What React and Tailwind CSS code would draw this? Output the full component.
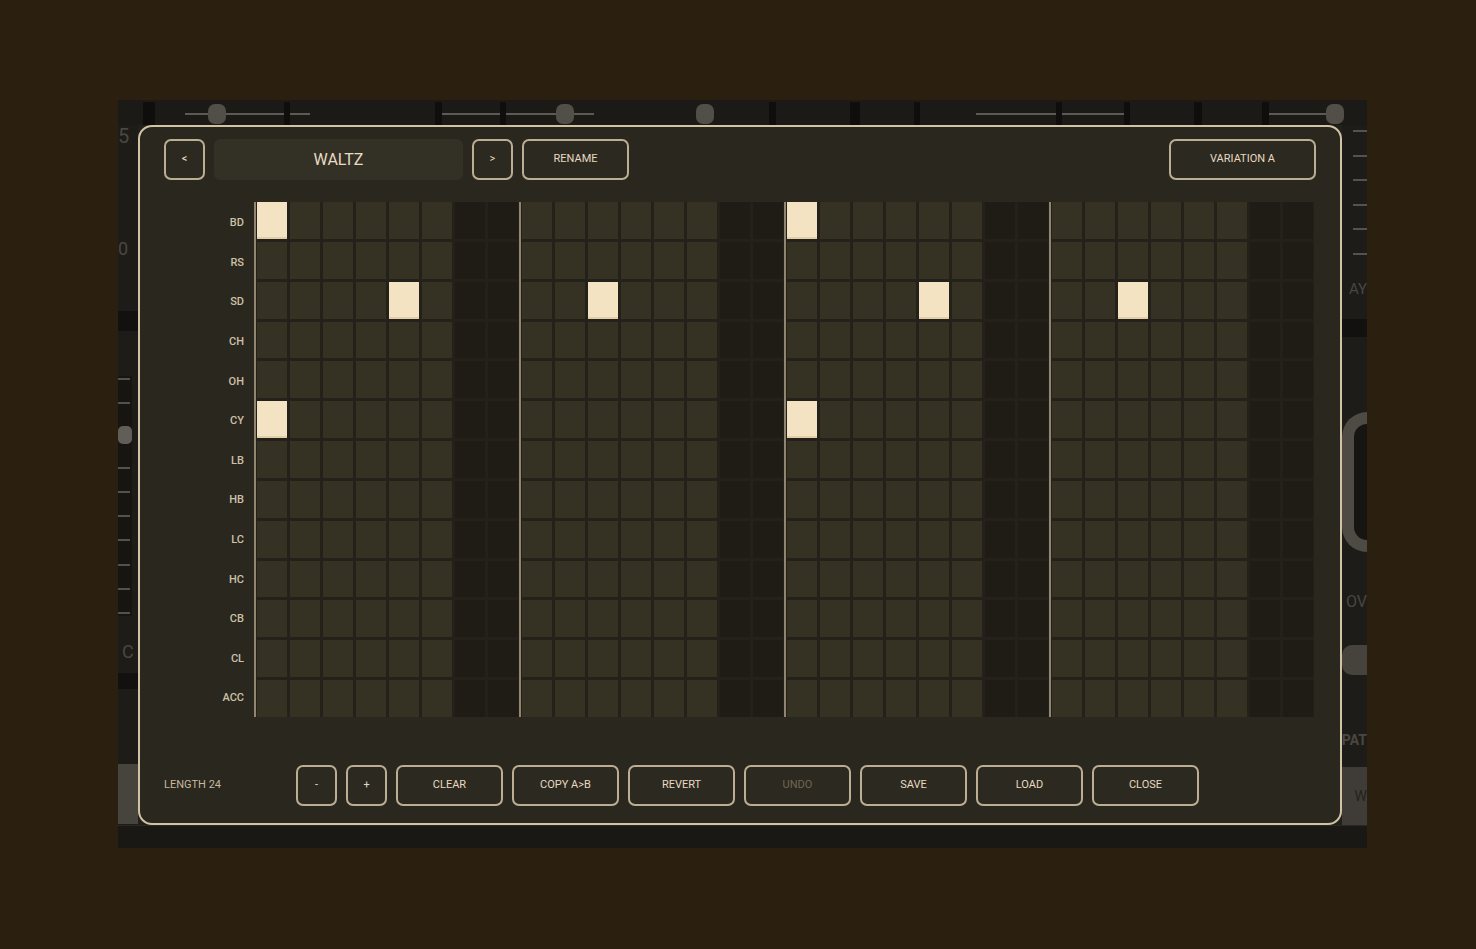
import React from "react";

const ROWS = ["BD", "RS", "SD", "CH", "OH", "CY", "LB", "HB", "LC", "HC", "CB", "CL", "ACC"];

// steps that are switched on, per instrument (24-step pattern, 6 steps per bar)
const PATTERN = {
  BD: [0, 12],
  SD: [4, 8, 16, 20],
  CY: [0, 12],
};

const BOTTOM_BUTTONS = ["CLEAR", "COPY A>B", "REVERT", "UNDO", "SAVE", "LOAD", "CLOSE"];

// top edge of the synth panel behind the dialog: [kind, width]
const TOP_STRIP = [
  ["gap", 25], ["tick", 12], ["gap", 30], ["line", 23], ["knob", 18], ["line", 58], ["tick", 6],
  ["line", 20], ["gap", 125], ["tick", 7], ["line", 58], ["tick", 6], ["line", 50], ["knob", 18],
  ["line", 20], ["gap", 102], ["knob", 18], ["gap", 55], ["tick", 7], ["gap", 74], ["tick", 10],
  ["gap", 54], ["tick", 6], ["gap", 56], ["line", 80], ["tick", 6], ["line", 62], ["tick", 6],
  ["gap", 64], ["tick", 8], ["gap", 60], ["tick", 7], ["line", 57], ["knob", 18],
];

function Btn({ children, className = "", dim = false }) {
  return (
    <button
      type="button"
      className={`flex h-[41px] items-center justify-center rounded-[7px] border-2 border-[#bcae92] bg-[#2c2920] text-[11px] ${
        dim ? "text-[#6f6756]" : "text-[#e6dac2]"
      } ${className}`}
    >
      {children}
    </button>
  );
}

function Group({ index }) {
  const cells = [];
  ROWS.forEach((row) => {
    for (let c = 0; c < 8; c++) {
      const active = c < 6;
      const step = index * 6 + c;
      const on = active && (PATTERN[row] || []).includes(step);
      cells.push(
        <div
          key={row + c}
          className={
            on
              ? "bg-[#f4e3c2] shadow-[inset_0_-2px_0_#e2cfa8]"
              : active
              ? "bg-[#363223]"
              : "bg-[#1e1c15]"
          }
        />
      );
    }
  });
  return (
    <div className="h-[515px] border-l-2 border-[#8f8570] bg-[#24211a] pl-[1px] pr-[1px]">
      <div className="grid h-full grid-cols-[repeat(8,30px)] grid-rows-[repeat(13,1fr)] gap-[3px]">
        {cells}
      </div>
    </div>
  );
}

function TopStrip() {
  return (
    <div className="flex h-[25px] items-center bg-[#1c1a16] pt-[2px]">
      {TOP_STRIP.map(([kind, w], i) => {
        if (kind === "tick") return <div key={i} className="h-full shrink-0 bg-[#0f0e0c]" style={{ width: w }} />;
        if (kind === "line") return <div key={i} className="h-[2px] shrink-0 bg-[#5d5a53]" style={{ width: w }} />;
        if (kind === "knob") return <div key={i} className="h-[20px] shrink-0 rounded-[7px] bg-[#524f48]" style={{ width: w }} />;
        return <div key={i} className="shrink-0" style={{ width: w }} />;
      })}
    </div>
  );
}

function LeftStrip() {
  return (
    <div className="flex h-[700px] w-[20px] flex-col items-start overflow-hidden bg-[#1e1c18] font-['Roboto',sans-serif] text-[#4a4741]">
      <span className="h-[22px] text-[20px] leading-[22px]">5</span>
      <span className="mt-[92px] h-[20px] text-[18px] leading-[20px]">0</span>
      <div className="mt-[52px] h-[20px] w-[20px] bg-[#121110]" />
      <div className="mt-[45px] flex h-[240px] w-[14px] flex-col justify-between bg-[#161512] py-[2px]">
        {[0, 1, 2, 3, 4, 5, 6, 7, 8, 9].map((i) =>
          i === 2 ? (
            <div key={i} className="h-[18px] w-[14px] rounded-[5px] bg-[#615e57]" />
          ) : (
            <div key={i} className="h-[2px] w-[12px] bg-[#55524b]" />
          )
        )}
      </div>
      <span className="mt-[25px] h-[22px] pl-[4px] text-[18px] leading-[22px]">C</span>
      <div className="mt-[10px] h-[16px] w-[20px] bg-[#121110]" />
      <div className="mt-[75px] h-[60px] w-[20px] bg-[#47443e]" />
    </div>
  );
}

function RightStrip() {
  return (
    <div className="flex h-[700px] w-[25px] flex-col items-end overflow-hidden bg-[#1e1c18] font-['Roboto',sans-serif] text-[#4a4741]">
      <div className="mt-[5px] flex h-[125px] flex-col justify-between">
        {[0, 1, 2, 3, 4, 5].map((i) => (
          <div key={i} className="h-[2px] w-[14px] bg-[#55524b]" />
        ))}
      </div>
      <span className="mt-[24px] h-[20px] text-[15px] leading-[20px]">AY</span>
      <div className="mt-[20px] h-[18px] w-[25px] bg-[#121110]" />
      <div className="mt-[70px] flex h-[150px] w-[25px] items-center justify-end">
        <div className="h-[140px] w-[25px] rounded-l-full border-y-[12px] border-l-[12px] border-[#4e4b45] bg-[#161512]" />
      </div>
      <span className="mt-[34px] h-[22px] text-[16px] leading-[22px]">OV</span>
      <div className="mt-[32px] h-[30px] w-[25px] rounded-l-[10px] bg-[#46433d]" />
      <span className="mt-[54px] h-[22px] text-[14px] font-bold leading-[22px]">PAT</span>
      <div className="mt-[16px] flex h-[58px] w-[25px] shrink-0 items-center justify-end bg-[#3f3c37] text-[14px] text-[#24221e]">
        W
      </div>
    </div>
  );
}

export default function App() {
  return (
    <div className="min-h-[949px] w-full bg-[#2b1f0f] pl-[118px] pt-[100px] font-['Roboto','Liberation_Sans',sans-serif]">
      <div className="flex w-[1249px] flex-col bg-[#22201b]">
        <TopStrip />
        <div className="flex">
          <LeftStrip />

          {/* Pattern editor dialog */}
          <div className="flex h-[700px] w-[1204px] flex-col rounded-[14px] border-2 border-[#d2c3a5] bg-[#2a271f] px-[24px] pt-[12px]">
            {/* Header */}
            <div className="flex items-center gap-[9px]">
              <Btn className="w-[41px]">&lt;</Btn>
              <div className="flex h-[41px] w-[249px] items-center justify-center rounded-[6px] bg-[#333026] text-[16px] text-[#e8dcc4]">
                WALTZ
              </div>
              <Btn className="w-[41px]">&gt;</Btn>
              <Btn className="w-[107px]">RENAME</Btn>
              <Btn className="ml-auto w-[147px]">VARIATION A</Btn>
            </div>

            {/* Step grid */}
            <div className="mt-[22px] flex">
              <div className="-ml-[24px] grid h-[515px] w-[114px] grid-rows-[repeat(13,1fr)] gap-[3px] pr-[10px] pt-[3px]">
                {ROWS.map((r) => (
                  <div key={r} className="flex items-center justify-end text-[11px] font-medium text-[#cdc1a8]">
                    {r}
                  </div>
                ))}
              </div>
              {[0, 1, 2, 3].map((g) => (
                <Group key={g} index={g} />
              ))}
            </div>

            {/* Footer */}
            <div className="mt-[48px] flex items-center gap-[9px]">
              <div className="w-[123px] text-[11px] text-[#c4b89f]">LENGTH 24</div>
              <Btn className="w-[41px]">-</Btn>
              <Btn className="w-[41px]">+</Btn>
              {BOTTOM_BUTTONS.map((b) => (
                <Btn key={b} className="w-[107px]" dim={b === "UNDO"}>
                  {b}
                </Btn>
              ))}
            </div>
          </div>

          <RightStrip />
        </div>
        <div className="h-[23px] border-t border-[#2a2823] bg-[#1a1815]" />
      </div>
    </div>
  );
}
